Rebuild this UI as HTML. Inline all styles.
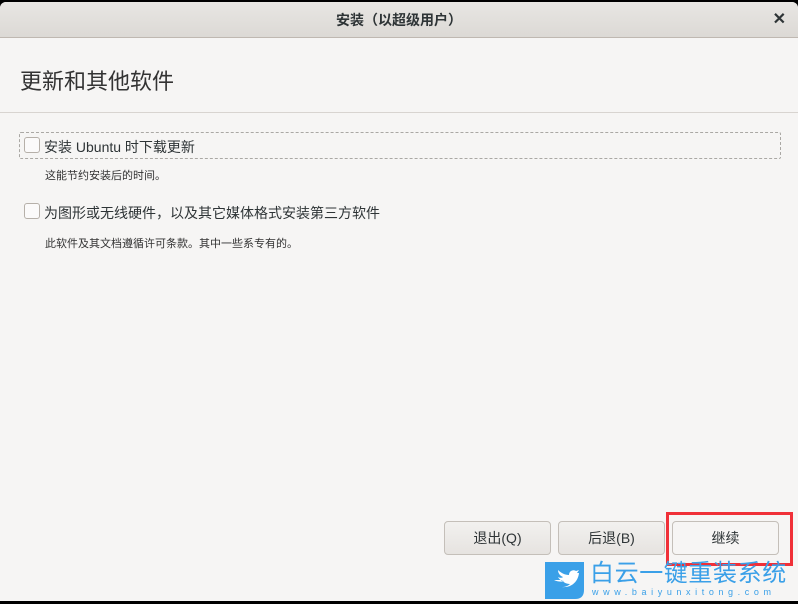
<!DOCTYPE html>
<html><head><meta charset="utf-8"><style>
*{margin:0;padding:0;box-sizing:border-box}
html,body{width:798px;height:604px;overflow:hidden}
body{background:#000;position:relative;font-family:"Liberation Sans","Noto Sans CJK SC",sans-serif;color:#333}
.win{position:absolute;left:0;top:2px;width:798px;height:599px;background:#f6f5f4;border-radius:6px 6px 0 0;overflow:hidden}
.hdr{height:36px;background:linear-gradient(#e8e6e3,#dcd9d5);border-bottom:1px solid #bfb8b1;text-align:center;font-size:14px;font-weight:bold;line-height:36px;color:#2e3436;position:relative}
.x{position:absolute;right:12px;top:0;font-size:16px;font-weight:bold}
h1{position:absolute;left:20px;top:62px;font-size:22px;font-weight:normal;color:#333}
.sep{position:absolute;left:0;top:110px;width:798px;border-top:1px solid #d8d4d0}
.cb{position:absolute;width:16px;height:16px;border:1px solid #b6b0a9;border-radius:3px;background:#fbfafa}
.lbl{position:absolute;font-size:14px;color:#2e3436;white-space:nowrap}
.sub{position:absolute;font-size:11px;color:#333;white-space:nowrap}
.focus{position:absolute;left:19px;top:130px;width:762px;height:27px;border:1px dashed #aaa8a4;border-radius:2px}
.btn{position:absolute;top:519px;width:107px;height:34px;border:1px solid #c4bfb9;border-radius:4px;background:linear-gradient(#f2f1ef,#e6e3e0);font-size:14px;text-align:center;line-height:32px;color:#2e3436}
.red{position:absolute;left:666px;top:512px;width:127px;height:54px;border:3px solid #f03038}
.logo{position:absolute;left:545px;top:562px}
.wm{position:absolute;left:590px;top:560px;font-size:24px;color:#3aa0e8;letter-spacing:0.6px;line-height:28px;white-space:nowrap}
.url{position:absolute;left:592px;top:587px;font-size:9px;color:#3aa0e8;letter-spacing:4.6px;white-space:nowrap;line-height:10px}
</style></head><body>
<div class="win">
<div class="hdr">安装（以超级用户）<span class="x">✕</span></div>
<h1>更新和其他软件</h1>
<div class="sep"></div>
<div class="focus"></div>
<div class="cb" style="left:24px;top:135px"></div>
<div class="lbl" style="left:44px;top:135px">安装 Ubuntu 时下载更新</div>
<div class="sub" style="left:45px;top:165px">这能节约安装后的时间。</div>
<div class="cb" style="left:24px;top:201px"></div>
<div class="lbl" style="left:44px;top:201px">为图形或无线硬件，以及其它媒体格式安装第三方软件</div>
<div class="sub" style="left:45px;top:233px">此软件及其文档遵循许可条款。其中一些系专有的。</div>
<div class="btn" style="left:444px">退出(Q)</div>
<div class="btn" style="left:558px">后退(B)</div>
<div class="btn" style="left:672px;background:#f6f5f4">继续</div>
</div>
<div class="red"></div>
<svg class="logo" width="39" height="37" viewBox="0 0 39 37"><path d="M0 0H39V28Q39 37 30 37H0Z" fill="#3aa0e8"/><path d="M9 18c4 2 8 2 10 1-3 0-5-2-6-4 2 1 4 1 5 0-3-1-5-4-5-7 3 3 7 5 11 5 0-4 4-6 7-4l3-1-2 3 2 0c-1 9-8 15-17 14 3 0 6-1 8-3-4 0-7-2-8-4z" fill="#fff"/></svg>
<div class="wm">白云一键重装系统</div>
<div class="url">www.baiyunxitong.com</div>
</body></html>
